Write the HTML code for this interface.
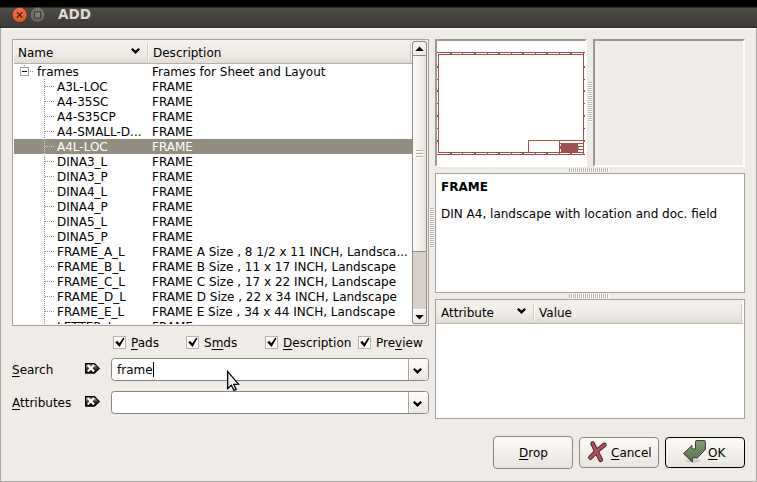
<!DOCTYPE html>
<html><head><meta charset="utf-8"><title>ADD</title>
<style>
*{box-sizing:border-box;margin:0;padding:0}
html,body{width:757px;height:482px;overflow:hidden;background:#efebe7}
body{position:relative;font-family:"DejaVu Sans","Liberation Sans",sans-serif;font-size:12px;color:#000;line-height:15px}
.abs{position:absolute}
#topbar{left:0;top:0;width:757px;height:7px;background:#000}
#title{left:0;top:7px;width:757px;height:21px;background:linear-gradient(#2c2b28 0,#2c2b28 1px,#4f4e48 1px,#45443f 8px,#3d3c38 19px,#2f2e2b 21px)}
#title .t{left:58px;top:0;height:20px;line-height:15px;font-weight:bold;font-size:13.5px;color:#dfdbd2}
#win{left:0;top:28px;width:757px;height:454px;background:#efebe7;border-left:1px solid #aaa7a2;border-right:1px solid #aaa7a2;border-bottom:1px solid #aaa7a2;box-shadow:inset 0 1px 0 #f7f5f2}
#tree{left:12px;top:39px;width:417px;height:287px;border:1px solid #a5a19a;background:#fff;overflow:hidden}
#hdr{left:1px;top:0;width:398px;height:24px;background:linear-gradient(#f4f1ed,#efebe7 60%,#e0dbd4);border-bottom:1px solid #b6b1a8}
.row{left:1px;width:398px;height:15px;white-space:nowrap}
.row .n{position:absolute;top:1px}
.row .d{position:absolute;left:138px;top:1px}
.sel{background:#928e7f;color:#fff}
.sunk{border-style:solid;border-width:2px;border-color:#9a9994 #fff #fff #9a9994}
.box{border:1px solid #a5a19a;background:#fff}
.btn{border:1px solid #8b867d;border-radius:4px;background:linear-gradient(#fbf9f7,#f3f0ec 50%,#e8e4df);}
.lbl{white-space:nowrap}
u{text-decoration:underline;text-decoration-thickness:1px;text-underline-offset:2px}
.cb{width:13px;height:13px;border:1px solid #b8b2a8;background:#fff}
</style></head><body>
<div id="topbar" class="abs"></div>
<div id="title" class="abs">
  <svg class="abs" style="left:10px;top:-2px" width="40" height="20" viewBox="0 0 40 20">
    <defs>
      <linearGradient id="g1" x1="0" y1="0" x2="0" y2="1"><stop offset="0" stop-color="#f1714a"/><stop offset="1" stop-color="#e6521a"/></linearGradient>
      <linearGradient id="g2" x1="0" y1="0" x2="0" y2="1"><stop offset="0" stop-color="#7c7b75"/><stop offset="1" stop-color="#64635d"/></linearGradient>
    </defs>
    <circle cx="9.6" cy="9.9" r="7.6" fill="url(#g1)" stroke="#3a2a22" stroke-width="0.8"/>
    <path d="M6.9 7.2 L12.3 12.6 M12.3 7.2 L6.9 12.6" stroke="#3c1d0c" stroke-width="1.2" fill="none"/>
    <circle cx="27.6" cy="9.9" r="7.6" fill="url(#g2)" stroke="#33322e" stroke-width="0.8"/>
    <rect x="24.4" y="6.8" width="6.2" height="6.2" fill="#807f79" stroke="#3c3b37" stroke-width="1.1"/>
  </svg>
  <div class="abs t">ADD</div>
</div>
<div id="win" class="abs"></div>

<!-- tree -->
<div id="tree" class="abs">
  <div id="hdr" class="abs">
    <div class="abs" style="left:4px;top:6px">Name</div>
    <div class="abs" style="left:139px;top:6px">Description</div>
    <div class="abs" style="left:133px;top:4px;width:1px;height:17px;background:#cfcac2"></div>
    <div class="abs" style="left:134px;top:4px;width:1px;height:17px;background:#fbfaf9"></div>
    <svg class="abs" style="left:116px;top:7px" width="11" height="8"><path d="M1 2.5 L2.5 1 L5.5 3.4 L8.5 1 L10 2.5 L5.5 7 Z" fill="#000" stroke="#fff" stroke-opacity=".55" stroke-width="1" paint-order="stroke"/></svg>
  </div>
  <div class="abs row" style="top:24px"><span class="n" style="left:23px">frames</span><span class="d">Frames for Sheet and Layout</span></div>
<div class="abs row" style="top:39px"><span class="n" style="left:43px">A3L-LOC</span><span class="d">FRAME</span></div>
<div class="abs row" style="top:54px"><span class="n" style="left:43px">A4-35SC</span><span class="d">FRAME</span></div>
<div class="abs row" style="top:69px"><span class="n" style="left:43px">A4-S35CP</span><span class="d">FRAME</span></div>
<div class="abs row" style="top:84px"><span class="n" style="left:43px">A4-SMALL-D...</span><span class="d">FRAME</span></div>
<div class="abs row sel" style="top:99px"><span class="n" style="left:43px">A4L-LOC</span><span class="d">FRAME</span></div>
<div class="abs row" style="top:114px"><span class="n" style="left:43px">DINA3_L</span><span class="d">FRAME</span></div>
<div class="abs row" style="top:129px"><span class="n" style="left:43px">DINA3_P</span><span class="d">FRAME</span></div>
<div class="abs row" style="top:144px"><span class="n" style="left:43px">DINA4_L</span><span class="d">FRAME</span></div>
<div class="abs row" style="top:159px"><span class="n" style="left:43px">DINA4_P</span><span class="d">FRAME</span></div>
<div class="abs row" style="top:174px"><span class="n" style="left:43px">DINA5_L</span><span class="d">FRAME</span></div>
<div class="abs row" style="top:189px"><span class="n" style="left:43px">DINA5_P</span><span class="d">FRAME</span></div>
<div class="abs row" style="top:204px"><span class="n" style="left:43px">FRAME_A_L</span><span class="d">FRAME A Size , 8 1/2 x 11 INCH, Landsca...</span></div>
<div class="abs row" style="top:219px"><span class="n" style="left:43px">FRAME_B_L</span><span class="d">FRAME B Size , 11 x 17 INCH, Landscape</span></div>
<div class="abs row" style="top:234px"><span class="n" style="left:43px">FRAME_C_L</span><span class="d">FRAME C Size , 17 x 22 INCH, Landscape</span></div>
<div class="abs row" style="top:249px"><span class="n" style="left:43px">FRAME_D_L</span><span class="d">FRAME D Size , 22 x 34 INCH, Landscape</span></div>
<div class="abs row" style="top:264px"><span class="n" style="left:43px">FRAME_E_L</span><span class="d">FRAME E Size , 34 x 44 INCH, Landscape</span></div>
<div class="abs row" style="top:279px"><span class="n" style="left:43px">LETTER_L</span><span class="d">FRAME</span></div>
  <!-- tree lines -->
  <svg class="abs" style="left:0;top:24px" width="60" height="262" shape-rendering="crispEdges">
    <g stroke="#8e8a83" stroke-width="1" stroke-dasharray="1 1" fill="none">
      <path d="M31.5 15 V262"/>
      <path d="M32 22.5 H41"/><path d="M32 37.5 H41"/><path d="M32 52.5 H41"/><path d="M32 67.5 H41"/><path d="M32 82.5 H41"/><path d="M32 97.5 H41"/><path d="M32 112.5 H41"/><path d="M32 127.5 H41"/><path d="M32 142.5 H41"/><path d="M32 157.5 H41"/><path d="M32 172.5 H41"/><path d="M32 187.5 H41"/><path d="M32 202.5 H41"/><path d="M32 217.5 H41"/><path d="M32 232.5 H41"/><path d="M32 247.5 H41"/><path d="M32 262.5 H41"/>
      <path d="M17 7.5 H20"/><path d="M11.5 1 V2"/>
    </g>
    <g stroke="#d2cfc6" stroke-width="1" stroke-dasharray="1 1" fill="none"><path d="M31.5 75 V90"/><path d="M32 82.5 H41"/></g>
    <rect x="7.5" y="3.5" width="8" height="8" fill="#fff" stroke="#a3a09a"/>
    <path d="M9 7.5 H14" stroke="#000" stroke-width="1"/>
  </svg>
  <!-- scrollbar -->
  <div class="abs" style="left:414px;top:0;width:1px;height:285px;background:#f1eeea"></div>
  <div class="abs" style="left:399px;top:0;width:16px;height:1px;background:#f1eeea"></div>
  <div class="abs" style="left:0;top:284px;width:399px;height:1px;background:#fff"></div><div class="abs" style="left:399px;top:284px;width:16px;height:1px;background:#f1eeea"></div>
  <div class="abs" style="left:397px;top:4px;width:1px;height:17px;background:#cfcac2"></div>
  <div class="abs" style="left:398px;top:4px;width:1px;height:17px;background:#fbfaf9"></div>
  <div class="abs" style="left:399px;top:1px;width:15px;height:283px;background:#d7d1c9;border:1px solid #8f8a82;border-radius:3px"></div>
  <div class="abs" style="left:399px;top:1px;width:15px;height:15px;border:1px solid #8f8a82;border-radius:3px 3px 0 0;background:linear-gradient(135deg,#fdfcfb,#ebe7e2)"></div>
  <svg class="abs" style="left:402px;top:6px" width="9" height="6"><path d="M0.3 5 L4.5 0.4 L8.7 5Z" fill="#000"/></svg>
  <div class="abs" style="left:399px;top:15px;width:15px;height:197px;border:1px solid #8f8a82;background:linear-gradient(90deg,#fbfaf8,#f1eeea 60%,#e6e2dc)"></div>
  <div class="abs" style="left:403px;top:110px;width:7px;height:1px;background:#b5afa6;box-shadow:0 3px 0 #b5afa6,0 6px 0 #b5afa6,0 1px 0 #fff,0 4px 0 #fff,0 7px 0 #fff"></div>
  <div class="abs" style="left:399px;top:269px;width:15px;height:15px;border:1px solid #8f8a82;border-top:none;box-shadow:inset 0 1px 0 #fdfcfb;border-radius:0 0 3px 3px;background:linear-gradient(135deg,#fdfcfb,#ebe7e2)"></div>
  <svg class="abs" style="left:402px;top:274px" width="9" height="6"><path d="M0.3 1 L4.5 5.6 L8.7 1Z" fill="#000"/></svg>
</div>

<!-- splitter handle (vertical between tree and right) -->
<div class="abs" style="left:430px;top:208px;width:4px;height:40px;background:repeating-linear-gradient(#bbb6ad 0 1px,#fff 1px 2px)"></div>

<!-- previews -->
<div class="abs sunk" style="left:435px;top:39px;width:152px;height:128px;background:#fff"></div>
<svg class="abs" style="left:437px;top:41px" width="150" height="126" shape-rendering="crispEdges" fill="#a64d4d"><rect x="0" y="11" width="148" height="1"/><rect x="0" y="113" width="148" height="1"/><rect x="1" y="13" width="146" height="1"/><rect x="1" y="111" width="146" height="1"/><rect x="1" y="13" width="1" height="99"/><rect x="146" y="13" width="1" height="99"/><rect x="13" y="12" width="2" height="1"/><rect x="13" y="112" width="2" height="1"/><rect x="25" y="12" width="1" height="1"/><rect x="25" y="112" width="1" height="1"/><rect x="37" y="12" width="2" height="1"/><rect x="37" y="112" width="2" height="1"/><rect x="50" y="12" width="1" height="1"/><rect x="50" y="112" width="1" height="1"/><rect x="61" y="12" width="2" height="1"/><rect x="61" y="112" width="2" height="1"/><rect x="74" y="12" width="1" height="1"/><rect x="74" y="112" width="1" height="1"/><rect x="85" y="12" width="2" height="1"/><rect x="85" y="112" width="2" height="1"/><rect x="98" y="12" width="1" height="1"/><rect x="98" y="112" width="1" height="1"/><rect x="109" y="12" width="2" height="1"/><rect x="109" y="112" width="2" height="1"/><rect x="122" y="12" width="1" height="1"/><rect x="122" y="112" width="1" height="1"/><rect x="133" y="12" width="2" height="1"/><rect x="133" y="112" width="2" height="1"/><rect x="146" y="12" width="1" height="1"/><rect x="146" y="112" width="1" height="1"/><rect x="0" y="25" width="1" height="2"/><rect x="147" y="25" width="1" height="2"/><rect x="0" y="38" width="1" height="1"/><rect x="147" y="38" width="1" height="1"/><rect x="0" y="49" width="1" height="2"/><rect x="147" y="49" width="1" height="2"/><rect x="0" y="62" width="1" height="1"/><rect x="147" y="62" width="1" height="1"/><rect x="0" y="74" width="1" height="2"/><rect x="147" y="74" width="1" height="2"/><rect x="0" y="87" width="1" height="1"/><rect x="147" y="87" width="1" height="1"/><rect x="0" y="99" width="1" height="2"/><rect x="147" y="99" width="1" height="2"/><rect x="91" y="99" width="56" height="1"/><rect x="91" y="99" width="1" height="13"/><rect x="122" y="99" width="1" height="13"/><rect x="124" y="102" width="17" height="9"/><rect x="123" y="102" width="24" height="1"/><rect x="140" y="105" width="7" height="1"/><rect x="140" y="108" width="7" height="1"/><rect x="123" y="105" width="1" height="3"/><rect x="141" y="106" width="1" height="2" fill-opacity=".5"/></svg>
<div class="abs" style="left:588px;top:82px;width:4px;height:40px;background:repeating-linear-gradient(#bbb6ad 0 1px,#fff 1px 2px)"></div>
<div class="abs sunk" style="left:593px;top:39px;width:152px;height:128px;background:#efebe7"></div>
<div class="abs" style="left:569px;top:168px;width:40px;height:4px;background:repeating-linear-gradient(90deg,#bbb6ad 0 1px,#fff 1px 2px)"></div>

<!-- description -->
<div class="abs box" style="left:435px;top:173px;width:310px;height:120px"></div>
<div class="abs lbl" style="left:441px;top:180px;font-weight:bold">FRAME</div>
<div class="abs lbl" style="left:441px;top:207px">DIN A4, landscape with location and doc. field</div>
<div class="abs" style="left:569px;top:294px;width:40px;height:4px;background:repeating-linear-gradient(90deg,#bbb6ad 0 1px,#fff 1px 2px)"></div>

<!-- attribute table -->
<div class="abs box" style="left:435px;top:299px;width:310px;height:120px"></div>
<div class="abs" style="left:436px;top:300px;width:307px;height:24px;background:linear-gradient(#f4f1ed,#efebe7 60%,#e0dbd4);border-bottom:1px solid #b6b1a8"></div>
<div class="abs lbl" style="left:441px;top:306px">Attribute</div>
<div class="abs lbl" style="left:539px;top:306px">Value</div>
<svg class="abs" style="left:516px;top:307px" width="11" height="8"><path d="M1 2.5 L2.5 1 L5.5 3.4 L8.5 1 L10 2.5 L5.5 7 Z" fill="#000" stroke="#fff" stroke-opacity=".55" stroke-width="1" paint-order="stroke"/></svg>
<div class="abs" style="left:533px;top:304px;width:1px;height:17px;background:#cfcac2"></div>
<div class="abs" style="left:534px;top:304px;width:1px;height:17px;background:#fbfaf9"></div>
<div class="abs" style="left:741px;top:304px;width:1px;height:17px;background:#cfcac2"></div>
<div class="abs" style="left:742px;top:304px;width:1px;height:17px;background:#fbfaf9"></div>

<!-- checkboxes -->
<div class="abs cb" style="left:113px;top:336px"></div><div class="abs lbl" style="left:131px;top:336px"><u>P</u>ads</div>
<div class="abs cb" style="left:186px;top:336px"></div><div class="abs lbl" style="left:204px;top:336px">S<u>m</u>ds</div>
<div class="abs cb" style="left:265px;top:336px"></div><div class="abs lbl" style="left:283px;top:336px"><u>D</u>escription</div>
<div class="abs cb" style="left:358px;top:336px"></div><div class="abs lbl" style="left:376px;top:336px">Pre<u>v</u>iew</div>
<svg class="abs" style="left:0;top:336px" width="400" height="13" viewBox="0 0 400 13"><g fill="#000">
<path transform="translate(113 0)" d="M2.3 6.4 L4.1 4.7 L6.3 7.3 L10.3 1.6 L11.4 2.4 L6.6 10.9 Z"/>
<path transform="translate(186 0)" d="M2.3 6.4 L4.1 4.7 L6.3 7.3 L10.3 1.6 L11.4 2.4 L6.6 10.9 Z"/>
<path transform="translate(265 0)" d="M2.3 6.4 L4.1 4.7 L6.3 7.3 L10.3 1.6 L11.4 2.4 L6.6 10.9 Z"/>
<path transform="translate(358 0)" d="M2.3 6.4 L4.1 4.7 L6.3 7.3 L10.3 1.6 L11.4 2.4 L6.6 10.9 Z"/>
</g></svg>


<!-- search / attributes -->
<div class="abs lbl" style="left:12px;top:363px"><u>S</u>earch</div>
<div class="abs lbl" style="left:12px;top:396px"><u>A</u>ttributes</div>
<svg class="abs" style="left:80px;top:358px" width="24" height="54" viewBox="0 0 24 54">
<defs><linearGradient id="cg" x1="0" y1="0" x2="0" y2="1"><stop offset="0" stop-color="#1a1a1a"/><stop offset="0.15" stop-color="#8a8a8a"/><stop offset="0.75" stop-color="#111"/><stop offset="1" stop-color="#000"/></linearGradient></defs>
<g><path d="M5 5 H14.7 L20 10.4 L14.7 15.8 H5 Z" fill="#000"/><path d="M6 6 H14.2 L18.6 10.4 L14.2 14.6 H6 Z" fill="url(#cg)"/><path d="M7.7 6.9 L14.1 13.6 M14.1 6.9 L7.7 13.6" stroke="#fff" stroke-width="2.1" fill="none"/></g>
<g transform="translate(0 33)"><path d="M5 5 H14.7 L20 10.4 L14.7 15.8 H5 Z" fill="#000"/><path d="M6 6 H14.2 L18.6 10.4 L14.2 14.6 H6 Z" fill="url(#cg)"/><path d="M7.7 6.9 L14.1 13.6 M14.1 6.9 L7.7 13.6" stroke="#fff" stroke-width="2.1" fill="none"/></g>
</svg>

<div class="abs" style="left:111px;top:358px;width:318px;height:23px;border:1px solid #8b867d;border-radius:3.5px;background:#fff"></div>
<div class="abs" style="left:408px;top:359px;width:20px;height:21px;border-left:1px solid #a8a49c;box-shadow:inset 1px 0 0 #fff;border-radius:0 3px 3px 0;background:linear-gradient(#fdfcfb,#f4f1ee 60%,#e9e5e0)"></div>
<svg class="abs" style="left:412px;top:367px" width="11" height="8"><path d="M1 2.5 L2.5 1 L5.5 3.4 L8.5 1 L10 2.5 L5.5 7 Z" fill="#000" stroke="#fff" stroke-opacity=".55" stroke-width="1" paint-order="stroke"/></svg>
<div class="abs lbl" style="left:117px;top:363px">frame</div>
<div class="abs" style="left:153px;top:362px;width:1px;height:15px;background:#000"></div>
<div class="abs" style="left:111px;top:391px;width:318px;height:23px;border:1px solid #8b867d;border-radius:3.5px;background:#fff"></div>
<div class="abs" style="left:408px;top:392px;width:20px;height:21px;border-left:1px solid #a8a49c;box-shadow:inset 1px 0 0 #fff;border-radius:0 3px 3px 0;background:linear-gradient(#fdfcfb,#f4f1ee 60%,#e9e5e0)"></div>
<svg class="abs" style="left:412px;top:400px" width="11" height="8"><path d="M1 2.5 L2.5 1 L5.5 3.4 L8.5 1 L10 2.5 L5.5 7 Z" fill="#000" stroke="#fff" stroke-opacity=".55" stroke-width="1" paint-order="stroke"/></svg>

<!-- buttons -->
<div class="abs btn" style="left:493px;top:436px;width:80px;height:33px"></div>
<div class="abs lbl" style="left:519px;top:446px"><u>D</u>rop</div>
<div class="abs btn" style="left:579px;top:437px;width:80px;height:31px"></div>
<div class="abs lbl" style="left:611px;top:446px"><u>C</u>ancel</div>
<div class="abs btn" style="left:665px;top:437px;width:80px;height:31px;border-color:#000"></div>
<div class="abs lbl" style="left:708px;top:446px"><u>O</u>K</div>
<svg class="abs" style="left:582px;top:436px" width="32" height="32" viewBox="0 0 32 32">
<g fill="none" stroke-linecap="round">
<path d="M10.6 7.6 Q13.6 14 18.8 23.8 M22.4 8.9 Q14 15 8.4 21.6" stroke="#4a1f26" stroke-width="4.6"/>
<path d="M10.6 7.6 Q13.6 14 18.8 23.8 M22.4 8.9 Q14 15 8.4 21.6" stroke="#b4505b" stroke-width="2.7"/>
</g>
</svg>
<svg class="abs" style="left:678px;top:436px" width="32" height="32" viewBox="0 0 32 32">
<defs><linearGradient id="okg" x1="0" y1="0" x2="0" y2="1"><stop offset="0" stop-color="#8a9c78"/><stop offset="0.5" stop-color="#6f8460"/><stop offset="1" stop-color="#5c704c"/></linearGradient>
<radialGradient id="oks"><stop offset="0" stop-color="#000" stop-opacity="0.22"/><stop offset="1" stop-color="#000" stop-opacity="0"/></radialGradient></defs>
<ellipse cx="15" cy="25" rx="10" ry="2.6" fill="url(#oks)"/>
<path d="M18.3 4.6 H26.6 Q27.4 4.6 27.4 5.4 V13.4 L19.4 21.9 H14.3 V26 L5.4 17.6 L14 9.4 V13 H17.5 V5.4 Q17.5 4.6 18.3 4.6 Z" fill="url(#okg)" stroke="#36432c" stroke-width="1" stroke-linejoin="round"/>
</svg>


<!-- cursor -->
<svg class="abs" style="left:225px;top:369px" width="18" height="24"><defs><linearGradient id="cur" x1="0" y1="0" x2="1" y2="0"><stop offset="0" stop-color="#d8d8d8"/><stop offset="0.5" stop-color="#fff"/></linearGradient></defs><path d="M2.6 2.4 V19.6 L6.4 16.2 L8.9 21.4 L11.2 20.4 L8.8 15.3 L13.5 15.1 Z" fill="url(#cur)" stroke="#000" stroke-width="1.3" stroke-linejoin="miter"/></svg>
</body></html>
